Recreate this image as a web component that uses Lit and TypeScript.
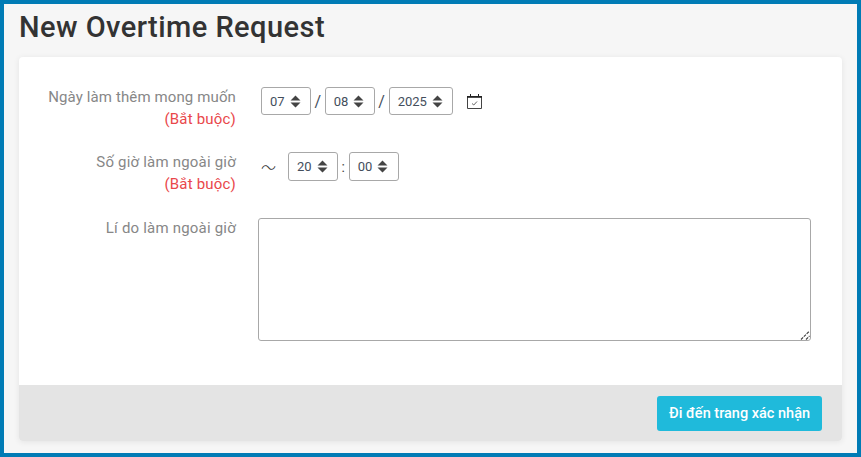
import { LitElement, html, css } from 'lit';
import { customElement } from 'lit/decorators.js';

@customElement('app-root')
export class AppRoot extends LitElement {
  static styles = css`
    :host {
      display: block;
      font-family: Roboto, "Noto Sans", sans-serif;
    }
    .frame {
      box-sizing: border-box;
      width: 861px;
      height: 457px;
      border: 4px solid #007bb5;
      background: #f6f6f6;
      padding: 0 15px;
      overflow: hidden;
    }
    h1 {
      margin: 0;
      padding-top: 5px;
      height: 53px;
      box-sizing: border-box;
      font-size: 29px;
      line-height: 36px;
      font-weight: 500;
      letter-spacing: 0.45px;
      color: #333;
    }
    .card {
      height: 384px;
      background: #fff;
      border-radius: 4px;
      box-shadow: 0 1px 6px rgba(0, 0, 0, 0.08);
      display: flex;
      flex-direction: column;
      overflow: hidden;
    }
    .body {
      flex: 1;
      padding: 30px 29px 0 0;
      display: flex;
      flex-direction: column;
    }
    .row {
      display: flex;
      align-items: flex-start;
    }
    .row.date {
      height: 65px;
    }
    .row.time {
      height: 66px;
    }
    .label {
      width: 217px;
      flex: none;
      margin-top: -1px;
      text-align: right;
      font-size: 15px;
      line-height: 22px;
      letter-spacing: 0.2px;
      color: #878787;
    }
    .label .long {
      letter-spacing: 0.12px;
    }
    .req {
      display: block;
      color: #e9474b;
    }
    .controls {
      display: flex;
      align-items: center;
      margin-left: 25px;
      color: #333;
    }
    .select {
      box-sizing: border-box;
      height: 28px;
      border: 1px solid #a8a8a8;
      border-radius: 3px;
      display: flex;
      align-items: center;
      gap: 5px;
      padding: 0 9.2px 0 8px;
      font-size: 13px;
      color: #444e5c;
      background: #fff;
    }
    .select.tall {
      height: 29px;
    }
    .select svg {
      display: block;
    }
    .sep {
      font-size: 16px;
      width: 14px;
      text-align: center;
      color: #444e5c;
    }
    .colon {
      width: 11px;
      text-align: center;
      font-size: 14px;
      color: #444;
    }
    .cal {
      margin-left: 14px;
      display: block;
    }
    .tilde {
      width: 27px;
      font-family: "Noto Sans CJK JP", sans-serif;
      font-size: 15px;
      font-weight: 300;
      color: #333;
    }
    .area {
      position: relative;
      margin-left: 22px;
    }
    textarea {
      box-sizing: border-box;
      display: block;
      width: 553px;
      height: 123px;
      border: 1px solid #a8a8a8;
      border-radius: 3px;
      background: #fff;
      outline: none;
      padding: 4px;
      resize: none;
    }
    .grip {
      position: absolute;
      right: 1px;
      bottom: 1px;
      display: block;
    }
    .footer {
      height: 56px;
      flex: none;
      background: #e4e4e4;
      display: flex;
      align-items: center;
      justify-content: flex-end;
      padding-right: 18px;
    }
    button {
      height: 35px;
      width: 165px;
      margin-right: 2px;
      border: none;
      border-radius: 3px;
      background: #1fbadb;
      color: #fff;
      font-family: inherit;
      font-size: 14.5px;
      font-weight: 500;
      padding: 0;
    }
  `;

  private arrows() {
    return html`<svg width="11" height="13" viewBox="0 0 11 13">
      <path d="M5.5 0.5 L10.5 5.5 H0.5 Z M0.5 7.5 H10.5 L5.5 12.5 Z" fill="#444"></path>
    </svg>`;
  }

  private select(value: string, tall = false) {
    return html`<div class="select ${tall ? 'tall' : ''}"><span>${value}</span>${this.arrows()}</div>`;
  }

  render() {
    return html`
      <div class="frame">
        <h1>New Overtime Request</h1>
        <div class="card">
          <div class="body">
            <div class="row date">
              <div class="label"><span class="long">Ngày làm thêm mong muốn</span><span class="req">(Bắt buộc)</span></div>
              <div class="controls">
                ${this.select('07')}
                <span class="sep">/</span>
                ${this.select('08')}
                <span class="sep">/</span>
                ${this.select('2025')}
                <svg class="cal" width="15" height="15" viewBox="0 0 15 15" fill="none">
                  <path d="M0.5 3 V14.5 H14.5 V3" stroke="#444"></path>
                  <path d="M0 2.5 H15 M3.5 0 V2 M11.5 0 V2" stroke="#222"></path>
                  <path d="M0 3.5 H15" stroke="#222" stroke-opacity="0.8"></path>
                  <path d="M5 9.5 L6.8 11 L10 7.5" stroke="#666"></path>
                </svg>
              </div>
            </div>
            <div class="row time">
              <div class="label">Số giờ làm ngoài giờ<span class="req">(Bắt buộc)</span></div>
              <div class="controls">
                <span class="tilde">〜</span>
                ${this.select('20', true)}
                <span class="colon">:</span>
                ${this.select('00', true)}
              </div>
            </div>
            <div class="row">
              <div class="label">Lí do làm ngoài giờ</div>
              <div class="area">
                <textarea></textarea>
                <svg class="grip" width="10" height="10" viewBox="0 0 10 10" fill="none" stroke="#444" stroke-width="1.2" stroke-dasharray="3 1">
                  <path d="M1 9.5 L9.5 1 M6 9.5 L9.5 6"></path>
                </svg>
              </div>
            </div>
          </div>
          <div class="footer"><button>Đi đến trang xác nhận</button></div>
        </div>
      </div>
    `;
  }
}
